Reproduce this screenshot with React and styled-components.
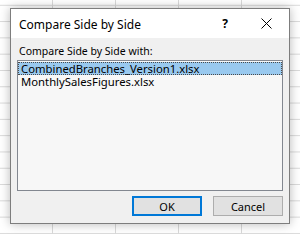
import styled, { createGlobalStyle } from 'styled-components';

const GlobalStyle = createGlobalStyle`
  html, body {
    margin: 0;
    padding: 0;
  }
  body {
    font-family: "Noto Sans", "Open Sans", "Liberation Sans", sans-serif;
    color: #000;
  }
`;

const Sheet = styled.div`
  width: 300px;
  height: 234px;
  box-sizing: border-box;
  padding: 8px 0 0 10px;
  overflow: hidden;
  background-color: #fff;
  background-image:
    repeating-linear-gradient(to right, transparent 0 57px, #d9d9d9 57px 58px, transparent 58px 63px),
    repeating-linear-gradient(to bottom, transparent 0 5px, #d9d9d9 5px 6px, transparent 6px 16.3px);
  background-size: 63px 100%, 100% 16.3px;
  background-position: -5px 0, 0 0;
`;

const Dialog = styled.div`
  width: 280px;
  height: 216px;
  box-sizing: border-box;
  display: flex;
  flex-direction: column;
  background: #f0f0f0;
  border: 1px solid #7d7d7d;
  box-shadow: 0 0 10px rgba(0, 0, 0, 0.28);
`;

const TitleBar = styled.div`
  height: 29px;
  flex: none;
  display: flex;
  align-items: center;
  background: #fff;
  padding-left: 8px;
`;

const Title = styled.div`
  flex: 1;
  font-size: 12px;
  padding-top: 2px;
`;

const TitleButton = styled.div`
  width: ${(p) => p.$w}px;
  height: 29px;
  display: flex;
  align-items: center;
  justify-content: center;
  font-size: 12px;
  font-weight: 700;
`;

const Body = styled.div`
  flex: 1;
  display: flex;
  flex-direction: column;
  padding: 6px 6px 0 6px;
`;

const Label = styled.div`
  font-size: 10.5px;
  padding-left: 2px;
  height: 14px;
  line-height: 14px;
  margin-bottom: 2px;
`;

const ListBox = styled.div`
  height: 131px;
  box-sizing: border-box;
  border: 1px solid #828790;
  background: #f7f7f7;
  padding: 1px 0 0 0;
  margin-bottom: 5px;
`;

const Item = styled.div`
  height: 13px;
  line-height: 11px;
  font-size: 11.3px;
  box-sizing: border-box;
  padding-left: 2px;
  white-space: nowrap;
  background: ${(p) => (p.$selected ? '#99c9ef' : 'transparent')};
  border: 1px ${(p) => (p.$selected ? 'dotted #4a4a4a' : 'solid transparent')};
`;

const Buttons = styled.div`
  display: flex;
  justify-content: flex-end;
  gap: 11px;
`;

const Button = styled.button`
  width: 70px;
  height: 20px;
  box-sizing: border-box;
  font-family: inherit;
  font-size: 11px;
  padding: 0;
  background: #e1e1e1;
  color: #000;
  border: ${(p) => (p.$default ? '2px solid #0078d7' : '1px solid #adadad')};
`;

function CloseIcon() {
  return (
    <svg width="11" height="11" viewBox="0 0 11 11">
      <path d="M0.5 0.5 L10.5 10.5 M10.5 0.5 L0.5 10.5" stroke="#000" strokeWidth="1" />
    </svg>
  );
}

export default function App() {
  return (
    <>
      <GlobalStyle />
      <Sheet>
        <Dialog>
          <TitleBar>
            <Title>Compare Side by Side</Title>
            <TitleButton $w={36}>?</TitleButton>
            <TitleButton $w={46}>
              <CloseIcon />
            </TitleButton>
          </TitleBar>
          <Body>
            <Label>Compare Side by Side with:</Label>
            <ListBox>
              <Item $selected>CombinedBranches_Version1.xlsx</Item>
              <Item>MonthlySalesFigures.xlsx</Item>
            </ListBox>
            <Buttons>
              <Button $default>OK</Button>
              <Button>Cancel</Button>
            </Buttons>
          </Body>
        </Dialog>
      </Sheet>
    </>
  );
}
